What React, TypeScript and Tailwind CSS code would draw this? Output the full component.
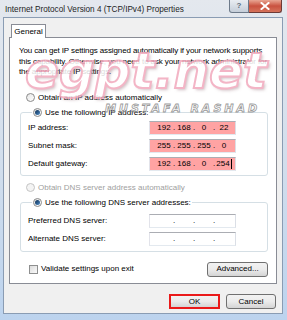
import React from 'react';

const ui = { fontFamily: '"Liberation Sans", Arial, sans-serif' };

function Radio({ checked, disabled }: { checked?: boolean; disabled?: boolean }) {
  return (
    <span
      className={`flex h-[9px] w-[9px] shrink-0 items-center justify-center rounded-full border ${
        disabled ? 'border-[#c4c4c4] bg-[#f4f4f4]' : 'border-[#8a8a8a] bg-linear-to-br from-[#e6e6e6] to-[#ffffff]'
      }`}
    >
      {checked && <span className="h-[5px] w-[5px] rounded-full bg-linear-to-br from-[#0f2f52] to-[#4a8ac7]" />}
    </span>
  );
}

function IpBox({ parts, pink, caret }: { parts?: string[]; pink?: boolean; caret?: boolean }) {
  const cells = parts ?? ['', '', '', ''];
  return (
    <div
      className={`flex h-[14px] w-[87px] items-center border border-[#abadb3] border-l-[#e2e3ea] border-r-[#dbdfe6] border-b-[#e3e9ef] pl-[6px] pr-[3px] ${
        pink ? 'bg-[#ffa3a3]' : 'bg-white'
      }`}
    >
      {cells.map((c, i) => (
        <React.Fragment key={i}>
          <span className="flex flex-1 items-center justify-center">
            {c}
            {caret && i === 3 && <span className="ml-[1px] h-[10px] w-px bg-black" />}
          </span>
          {i < 3 && <span className="w-[4px] text-center">.</span>}
        </React.Fragment>
      ))}
    </div>
  );
}

function Row({ label, children }: { label: string; children: React.ReactNode }) {
  return (
    <div className="flex items-center">
      <span className="w-[121px]">{label}</span>
      {children}
    </div>
  );
}

function Button({ children, w, red }: { children: React.ReactNode; w: string; red?: boolean }) {
  return (
    <div
      className={`${w} flex h-[15px] items-center justify-center bg-linear-to-b from-[#f2f2f2] via-[#ebebeb] to-[#d4d4d4] ${
        red ? 'border-2 border-[#ea1a1a]' : 'rounded-[3px] border border-[#707070]'
      }`}
    >
      {children}
    </div>
  );
}

export default function App() {
  return (
    <div
      className="relative h-[320px] w-[287px] overflow-hidden bg-linear-to-b from-[#e4e8ee] via-[#d2deec] to-[#bcd3ee] text-[8px] text-black"
      style={ui}
    >
      {/* title bar */}
      <div className="flex h-[17px] items-start justify-between pl-[5px] pr-[5px]">
        <span className="pt-[5px] text-[8.2px] leading-[10px] text-[#1e1e1e]">Internet Protocol Version 4 (TCP/IPv4) Properties</span>
        <div className="flex">
          <div className="flex h-[13px] w-[20px] items-center justify-center rounded-bl-[3px] border border-t-0 border-[#6d7a8a] bg-linear-to-b from-[#e9edf2] to-[#c5ced9] text-[8px] font-bold text-[#5d6b7c]">
            ?
          </div>
          <div className="flex h-[13px] w-[33px] items-center justify-center rounded-br-[3px] border border-t-0 border-l-0 border-[#6d3a36] bg-linear-to-b from-[#e8a593] via-[#c9513f] to-[#d5735b]">
            <svg width="10" height="8" viewBox="0 0 10 8">
              <path d="M1.5 1 L8.5 7 M8.5 1 L1.5 7" stroke="#fff" strokeWidth="2" strokeLinecap="square" />
            </svg>
          </div>
        </div>
      </div>

      {/* client area */}
      <div className="ml-[3px] mr-[4px] h-[297px] border border-[#8a9cb3] bg-[#f0f0f0] pl-[5px] pr-[5px] pt-[6px]">
        <div className="ml-[2px] flex">
          <div className="relative z-10 -mb-px flex h-[14px] w-[35px] items-center justify-center border border-b-0 border-[#898c95] bg-white">
            General
          </div>
        </div>
        <div className="h-[247px] border border-[#898c95] bg-white pl-[9px] pr-[8px] pt-[8px]">
          <p className="-mr-[6px] leading-[10.5px] tracking-[-0.12px]">
            You can get IP settings assigned automatically if your network supports this capability. Otherwise, you need to ask your network administrator for the appropriate IP settings.
          </p>

          <div className="mt-[14px] ml-[7px] flex h-[12px] items-center gap-[3px]">
            <Radio />
            <span>Obtain an IP address automatically</span>
          </div>

          <fieldset className="mt-[3px] ml-[1px] rounded-[3px] border border-[#d5dfe5] pb-[4px] pl-[7px]">
            <legend className="ml-[4px] flex h-[12px] items-center gap-[3px] px-[1px]">
              <Radio checked />
              <span>Use the following IP address:</span>
            </legend>
            <div className="flex flex-col gap-[4px] pt-[2px]">
              <Row label="IP address:">
                <IpBox pink parts={['192', '168', '0', '22']} />
              </Row>
              <Row label="Subnet mask:">
                <IpBox pink parts={['255', '255', '255', '0']} />
              </Row>
              <Row label="Default gateway:">
                <IpBox pink caret parts={['192', '168', '0', '254']} />
              </Row>
            </div>
          </fieldset>

          <div className="mt-[6px] ml-[7px] flex h-[12px] items-center gap-[3px] text-[#a0a0a0]">
            <Radio disabled />
            <span>Obtain DNS server address automatically</span>
          </div>

          <fieldset className="mt-[3px] ml-[1px] rounded-[3px] border border-[#d5dfe5] pb-[5px] pl-[7px]">
            <legend className="ml-[4px] flex h-[12px] items-center gap-[3px] px-[1px]">
              <Radio checked />
              <span>Use the following DNS server addresses:</span>
            </legend>
            <div className="flex flex-col gap-[4px] pt-[5px]">
              <Row label="Preferred DNS server:">
                <IpBox />
              </Row>
              <Row label="Alternate DNS server:">
                <IpBox />
              </Row>
            </div>
          </fieldset>

          <div className="mt-[10px] flex items-center justify-between">
            <div className="ml-[10px] flex items-center gap-[3px]">
              <span className="h-[9px] w-[9px] border border-[#8e8f8f] bg-linear-to-br from-[#dcdcdc] to-[#fafafa]" />
              <span>Validate settings upon exit</span>
            </div>
            <Button w="w-[61px]">Advanced...</Button>
          </div>
        </div>

        <div className="mt-[10px] flex justify-end gap-[6px] pr-[1px]">
          <Button w="w-[51px]" red>
            OK
          </Button>
          <Button w="w-[50px]">Cancel</Button>
        </div>
      </div>

      {/* watermark */}
      <div
        className="pointer-events-none absolute left-[25px] top-[46px] select-none text-[50px] font-bold italic leading-[50px] text-white opacity-85 [-webkit-text-stroke:2px_#f2a9bd] [text-shadow:2px_2px_3px_rgba(150,110,120,0.5)]"
        style={{ fontFamily: '"DejaVu Sans", sans-serif' }}
      >
        egpt.net
      </div>
      <div
        className="pointer-events-none absolute left-[105px] top-[101px] select-none text-[11px] font-bold italic tracking-[3px] text-transparent [-webkit-text-stroke:0.8px_#9a9a9a]"
        style={{ fontFamily: '"DejaVu Sans", sans-serif' }}
      >
        MUSTAFA RASHAD
      </div>
    </div>
  );
}
